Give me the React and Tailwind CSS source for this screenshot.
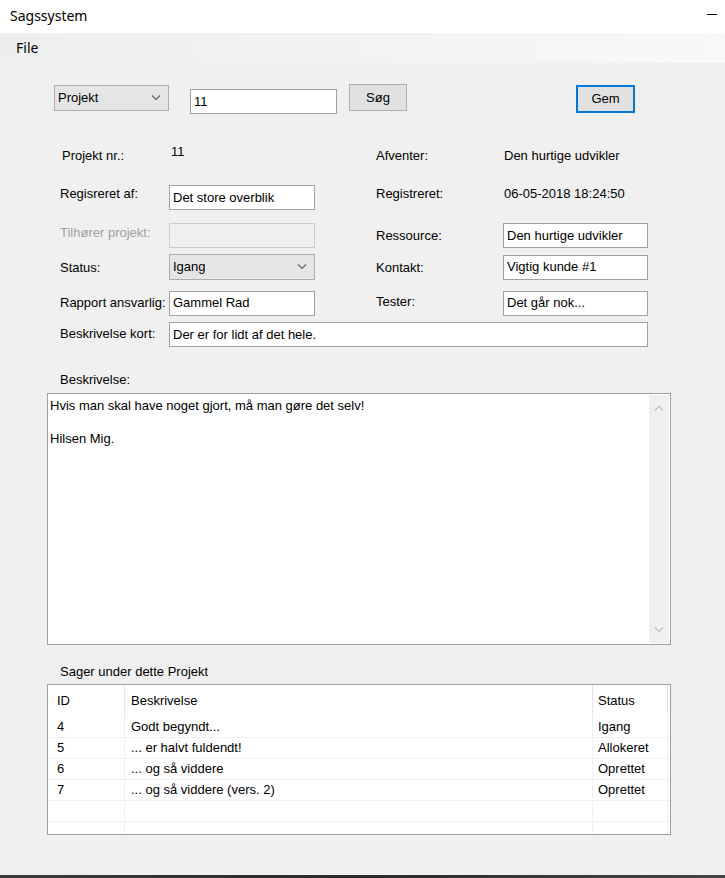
import React from 'react';

const Chevron = ({ up = false, color = '#606060' }) => (
    <svg width="10" height="6" viewBox="0 0 10 6" className="block">
        <path d={up ? 'M1 5.5 L5 1.5 L9 5.5' : 'M1 0.5 L5 4.5 L9 0.5'} fill="none" stroke={color} strokeWidth="1.1" />
    </svg>
);

const TextBox = ({ value = '', className = '', disabled = false }) => (
    <div
        className={`flex items-center px-[3px] border whitespace-nowrap overflow-hidden ${
            disabled ? 'bg-[#f0f0f0] border-[#cccccc]' : 'bg-white border-[#a0a0a0]'
        } ${className}`}
    >
        {value}
    </div>
);

const ComboBox = ({ value, className = '' }) => (
    <div className={`flex items-center justify-between pl-[3px] pr-[7px] bg-[#e5e5e5] border border-[#adadad] ${className}`}>
        <span>{value}</span>
        <Chevron />
    </div>
);

const Button = ({ children, className = '', focused = false }) => (
    <div
        className={`flex items-center justify-center bg-[#e1e1e1] ${
            focused ? 'border-2 border-[#0078d7]' : 'border border-[#adadad]'
        } ${className}`}
    >
        {children}
    </div>
);

const rows = [
    { id: '4', text: 'Godt begyndt...', status: 'Igang' },
    { id: '5', text: '... er halvt fuldendt!', status: 'Allokeret' },
    { id: '6', text: '... og så viddere', status: 'Oprettet' },
    { id: '7', text: '... og så viddere (vers. 2)', status: 'Oprettet' },
    { id: '', text: '', status: '' },
    { id: '', text: '', status: '' },
];

export default function App() {
    return (
        <div className="w-[725px] h-[878px] flex flex-col overflow-hidden bg-[#f0f0f0] text-black">
            {/* Title bar */}
            <div className="h-[33px] bg-white flex items-center justify-between pl-[10px] pr-[8px] font-['Noto_Sans',sans-serif] text-[14px]">
                <span className="-mt-[3px]">Sagssystem</span>
                <div className="w-[10px] h-px bg-black -mt-[4px]" />
            </div>

            {/* Menu bar */}
            <div className="h-[30px] bg-linear-to-r from-[#eeeeee] to-[#f8f8f8] flex items-center pl-[16px] font-['Noto_Sans',sans-serif] text-[14px]">
                <span className="-mt-[1px]">File</span>
            </div>

            {/* Form body */}
            <div className="flex-1 flex flex-col font-['Liberation_Sans',Arial,sans-serif] text-[13px]">
                {/* Search row */}
                <div className="h-[80px] flex items-start pt-[21px] pl-[54px]">
                    <ComboBox value="Projekt" className="mt-[1px] w-[115px] h-[26px]" />
                    <TextBox value="11" className="ml-[21px] mt-[5px] w-[147px] h-[25px]" />
                    <Button className="ml-[12px] w-[58px] h-[27px]">Søg</Button>
                    <Button focused className="ml-[169px] mt-[1px] w-[59px] h-[28px]">Gem</Button>
                </div>

                {/* Fields */}
                <div className="flex flex-col pl-[60px]">
                    <div className="h-[25px] flex items-center">
                        <span className="w-[109px] pl-[2px]">Projekt nr.:</span>
                        <span className="w-[146px] pl-[2px] mb-[8px]">11</span>
                        <span className="w-[61px]" />
                        <span className="w-[127px]">Afventer:</span>
                        <span className="w-[145px] pl-[1px]">Den hurtige udvikler</span>
                    </div>

                    <div className="mt-[17px] h-[25px] flex items-center">
                        <span className="w-[109px] mb-[8px]">Regisreret af:</span>
                        <TextBox value="Det store overblik" className="w-[146px] h-[25px]" />
                        <span className="w-[61px]" />
                        <span className="w-[127px] mb-[8px]">Registreret:</span>
                        <span className="w-[145px] pl-[1px] mb-[8px]">06-05-2018 18:24:50</span>
                    </div>

                    <div className="mt-[13px] h-[25px] flex items-center">
                        <span className="w-[109px] mb-[6px] text-[#a0a0a0]">Tilhører projekt:</span>
                        <TextBox disabled className="w-[146px] h-[25px]" />
                        <span className="w-[61px]" />
                        <span className="w-[127px]">Ressource:</span>
                        <TextBox value="Den hurtige udvikler" className="w-[145px] h-[25px]" />
                    </div>

                    <div className="mt-[6px] h-[26px] flex items-center">
                        <span className="w-[109px] mt-[2px]">Status:</span>
                        <ComboBox value="Igang" className="w-[146px] h-[26px]" />
                        <span className="w-[61px]" />
                        <span className="w-[127px] mt-[2px]">Kontakt:</span>
                        <TextBox value="Vigtig kunde #1" className="w-[145px] h-[25px]" />
                    </div>

                    <div className="mt-[11px] h-[24px] flex items-center">
                        <span className="w-[109px]">Rapport ansvarlig:</span>
                        <TextBox value="Gammel Rad" className="w-[146px] h-[25px]" />
                        <span className="w-[61px]" />
                        <span className="w-[127px] mb-[2px]">Tester:</span>
                        <TextBox value="Det går nok..." className="w-[145px] h-[25px]" />
                    </div>

                    <div className="mt-[7px] h-[25px] flex items-center">
                        <span className="w-[109px] mb-[2px]">Beskrivelse kort:</span>
                        <TextBox value="Der er for lidt af det hele." className="w-[479px] h-[25px]" />
                    </div>
                </div>

                {/* Beskrivelse */}
                <div className="mt-[25px] h-[16px] leading-[16px] pl-[60px]">Beskrivelse:</div>
                <div className="mt-[5px] ml-[47px] w-[624px] h-[252px] border border-[#a0a0a0] bg-white flex">
                    <div className="flex-1 pl-[2px] pt-[4px] leading-[16.5px]">
                        <div>Hvis man skal have noget gjort, må man gøre det selv!</div>
                        <div>&nbsp;</div>
                        <div>Hilsen Mig.</div>
                    </div>
                    <div className="w-[20px] mr-[1px] my-[1px] bg-[#f0f0f0] flex flex-col items-center justify-between py-[10px]">
                        <Chevron up color="#c0c0c0" />
                        <Chevron color="#c0c0c0" />
                    </div>
                </div>

                {/* Sager list */}
                <div className="mt-[19px] h-[16px] leading-[16px] pl-[60px]">Sager under dette Projekt</div>
                <div className="mt-[4px] ml-[47px] w-[624px] h-[151px] border border-[#a0a0a0] bg-white overflow-hidden">
                    <div className="grid grid-cols-[76px_468px_75px_1fr] h-[32px]">
                        <div className="flex items-center pl-[9px] pb-[1px]">ID</div>
                        <div className="flex items-center pl-[6px] pb-[1px] border-l border-[#e5e5e5]">Beskrivelse</div>
                        <div className="flex items-center pl-[5px] pb-[1px] border-l border-[#e5e5e5]">Status</div>
                        <div className="border-l border-[#e5e5e5]" />
                    </div>
                    {rows.map((r, i) => (
                        <div key={i} className="grid grid-cols-[76px_468px_75px_1fr] h-[21px] border-b border-[#f0f0f0]">
                            <div className="flex items-center pl-[9px]">{r.id}</div>
                            <div className="flex items-center pl-[6px] border-l border-[#f0f0f0]">{r.text}</div>
                            <div className="flex items-center pl-[5px] border-l border-[#f0f0f0]">{r.status}</div>
                            <div className="border-l border-[#f0f0f0]" />
                        </div>
                    ))}
                </div>

                <div className="flex-1" />
            </div>

            {/* Desktop strip below the window */}
            <div className="h-[3px] bg-linear-to-r from-[#3a3a3a] via-[#2a2a2a] to-[#454545]" />
        </div>
    );
}
